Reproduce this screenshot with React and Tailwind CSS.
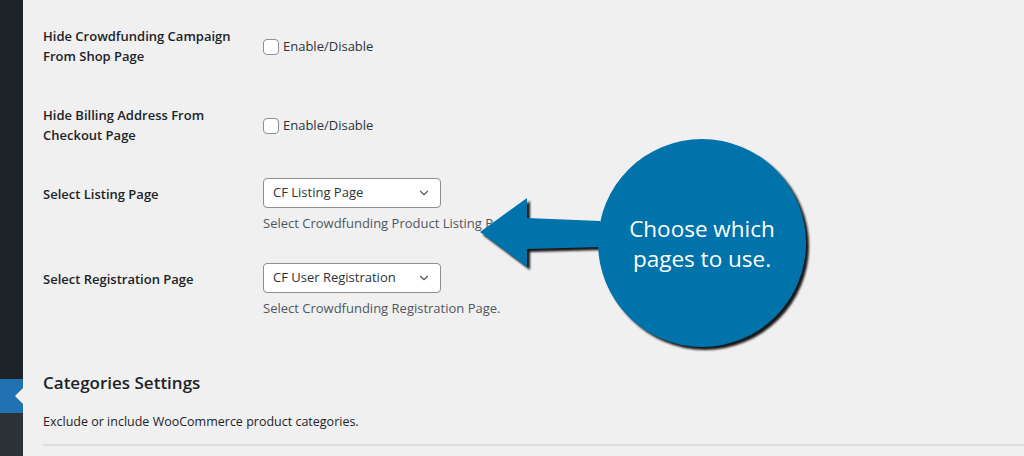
import { ChevronDown } from 'lucide-react';

const font = { fontFamily: '"Open Sans", "Liberation Sans", sans-serif' };

const Checkbox = () => (
    <label className="flex items-center gap-[4px] text-[13px] text-[#2c3338]">
        <span className="w-4 h-4 rounded-[4px] border border-[#8c8f94] bg-white" />
        Enable/Disable
    </label>
);

const Select = ({ value }) => (
    <div className="w-[178px] h-[30px] rounded-[4px] border border-[#8c8f94] bg-white flex items-center justify-between pl-[9px] pr-[9px] text-[13px] text-[#2c3338]">
        <span>{value}</span>
        <ChevronDown className="w-[14px] h-[14px] text-[#50575e]" strokeWidth={2} />
    </div>
);

const Row = ({ label, height, children }) => (
    <div className="flex" style={{ height }}>
        <div className="w-[220px] shrink-0 pt-[26px] text-[13px] font-semibold leading-[20px] text-[#1d2327]">
            {label}
        </div>
        <div className="pt-[20px]">{children}</div>
    </div>
);

const Callout = () => (
    <div className="absolute left-[470px] top-[130px] w-[350px] h-[230px]">
        <svg width="350" height="230" viewBox="470 130 350 230" className="absolute inset-0 drop-shadow-[3px_3px_1px_rgba(0,0,0,0.9)]">
            <path
                d="M480 232 L527 198 L527 218 L600 221 L600 247 L527 249 L527 267 Z"
                fill="#0073aa"
            />
            <circle cx="702" cy="243" r="104" fill="#0073aa" />
        </svg>
        <div className="absolute left-[130px] top-[84px] w-[204px] text-center text-white text-[22.5px] leading-[30px]" style={font}>
            Choose which<br />pages to use.
        </div>
    </div>
);

export default function App() {
    return (
        <div className="relative w-[1024px] h-[456px] overflow-hidden flex bg-[#f0f0f1]" style={font}>
            <aside className="w-[23px] shrink-0 flex flex-col bg-[#1d2327]">
                <div className="h-[379px]" />
                <div className="h-[34px] bg-[#2271b1] flex items-center justify-end">
                    <span className="w-0 h-0 border-y-[8px] border-y-transparent border-r-[8px] border-r-[#f0f0f1]" />
                </div>
                <div className="grow bg-[#2c3338]" />
            </aside>
            <main className="grow pl-5">
                <Row label={<>Hide Crowdfunding Campaign<br />From Shop Page</>} height={79}>
                    <div className="pt-[17px]"><Checkbox /></div>
                </Row>
                <Row label={<>Hide Billing Address From<br />Checkout Page</>} height={79}>
                    <div className="pt-[17px]"><Checkbox /></div>
                </Row>
                <Row label="Select Listing Page" height={85}>
                    <Select value="CF Listing Page" />
                    <p className="mt-[5px] text-[13px] leading-[20px] text-[#50575e]">Select Crowdfunding Product Listing Page.</p>
                </Row>
                <Row label="Select Registration Page" height={85}>
                    <Select value="CF User Registration" />
                    <p className="mt-[5px] text-[13px] leading-[20px] text-[#50575e]">Select Crowdfunding Registration Page.</p>
                </Row>
                <h2 className="mt-[43px] text-[17px] font-semibold leading-[24px] text-[#1d2327]">Categories Settings</h2>
                <p className="mt-[17px] text-[12.5px] leading-[20px] text-[#1d2327]">Exclude or include WooCommerce product categories.</p>
                <div className="mt-[12px] border-t-2 border-[#dcdcde]" />
            </main>
            <Callout />
        </div>
    );
}
